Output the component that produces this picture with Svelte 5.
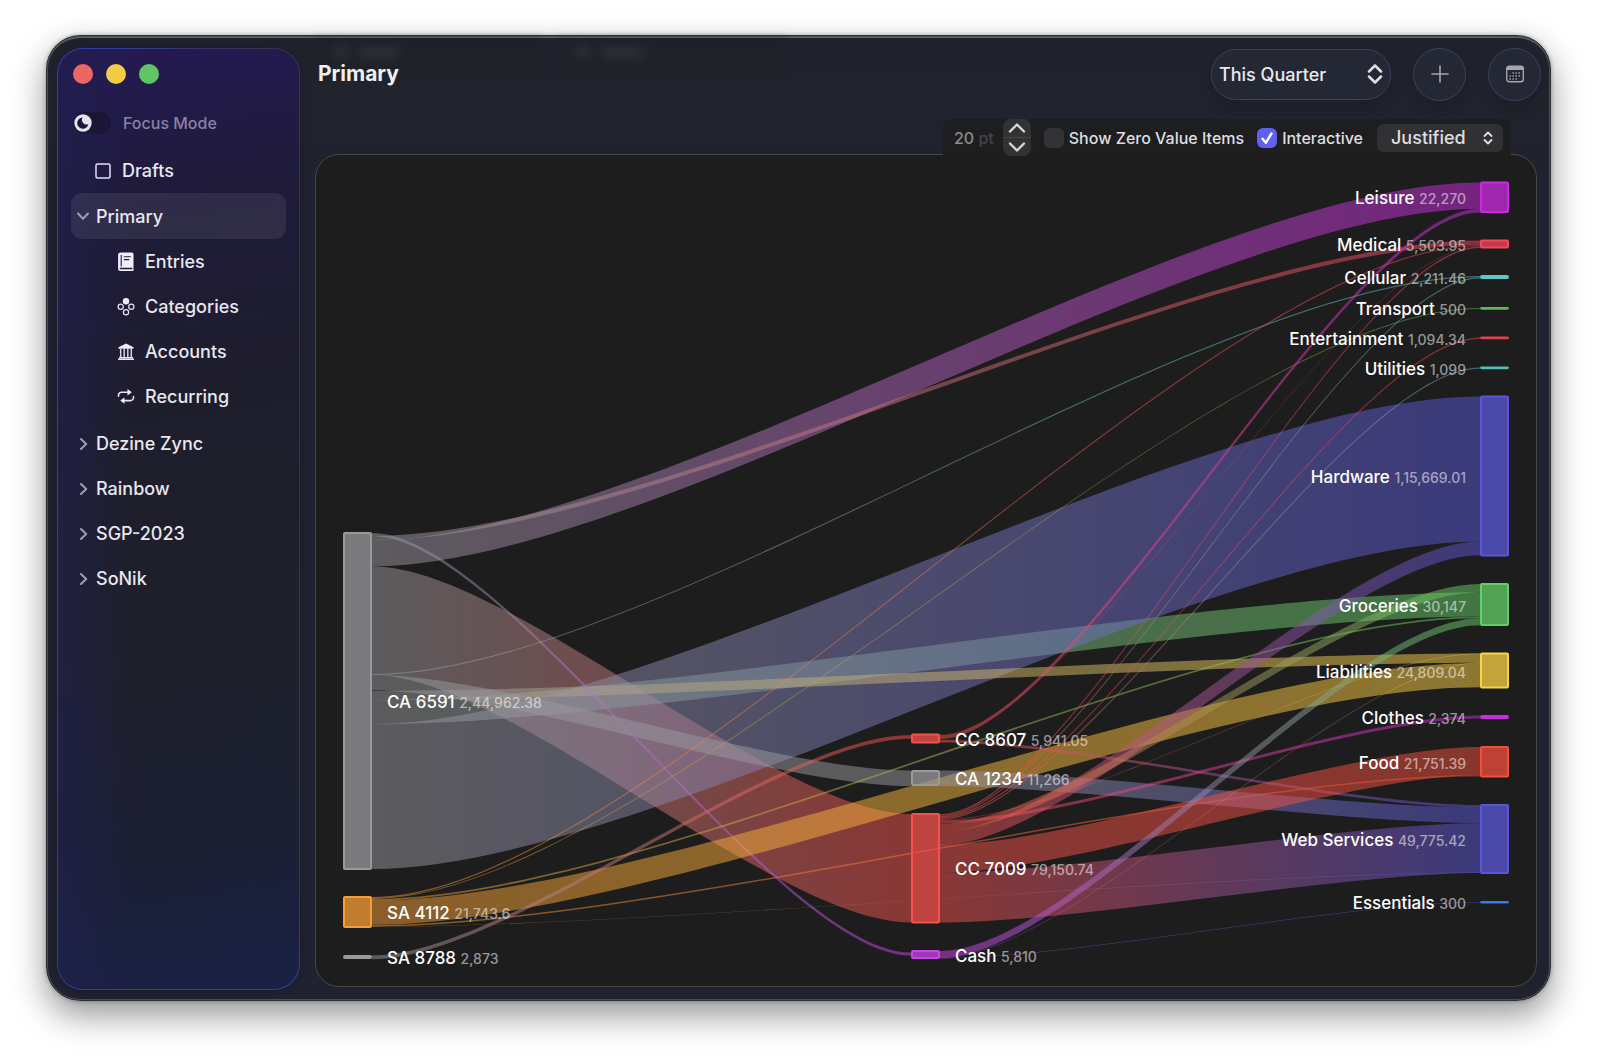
<script>
  const W = 27;
  const COL = { left: 28, mid: 596, right: 1165 };

  const nodes = {
    ca6591: { label: 'CA 6591', value: '2,44,962.38', col: 'left', y: 378, h: 336, color: '#9a999e' },
    sa4112: { label: 'SA 4112', value: '21,743.6', col: 'left', y: 742, h: 30, color: '#f79d35' },
    sa8788: { label: 'SA 8788', value: '2,873', col: 'left', y: 801, h: 2, color: '#9a999e' },
    cc8607: { label: 'CC 8607', value: '5,941.05', col: 'mid', y: 579.5, h: 8, color: '#f5524b' },
    ca1234: { label: 'CA 1234', value: '11,266', col: 'mid', y: 616, h: 14, color: '#9a999e' },
    cc7009: { label: 'CC 7009', value: '79,150.74', col: 'mid', y: 659, h: 108.5, color: '#f5524b' },
    cash: { label: 'Cash', value: '5,810', col: 'mid', y: 796, h: 7, color: '#cb41ee' },
    leisure: { label: 'Leisure', value: '22,270', col: 'right', y: 27.5, h: 29.5, color: '#cb2be0' },
    medical: { label: 'Medical', value: '5,503.95', col: 'right', y: 85.5, h: 7, color: '#f9455c' },
    cellular: { label: 'Cellular', value: '2,211.46', col: 'right', y: 121, h: 2, color: '#5ac8c8' },
    transport: { label: 'Transport', value: '500', col: 'right', y: 153, h: 0.7, color: '#5cba58' },
    entertainment: { label: 'Entertainment', value: '1,094.34', col: 'right', y: 182.5, h: 0.8, color: '#df4254' },
    utilities: { label: 'Utilities', value: '1,099', col: 'right', y: 212.4, h: 0.8, color: '#58bab8' },
    hardware: { label: 'Hardware', value: '1,15,669.01', col: 'right', y: 241.5, h: 159, color: '#5957d8' },
    groceries: { label: 'Groceries', value: '30,147', col: 'right', y: 429, h: 41, color: '#65cf67' },
    liabilities: { label: 'Liabilities', value: '24,809.04', col: 'right', y: 498.5, h: 34, color: '#fbd146' },
    clothes: { label: 'Clothes', value: '2,374', col: 'right', y: 561, h: 2, color: '#cb2be0' },
    food: { label: 'Food', value: '21,751.39', col: 'right', y: 592, h: 29.5, color: '#f34f3c' },
    web: { label: 'Web Services', value: '49,775.42', col: 'right', y: 650, h: 68, color: '#5957d8' },
    essentials: { label: 'Essentials', value: '300', col: 'right', y: 747, h: 0.6, color: '#3a78ee' }
  };

  // source, offset in source, target, offset in target, thickness
  const links = [
    ['ca6591', 33.3, 'cc7009', 0, 108.5],
    ['ca6591', 7, 'leisure', 0, 26.3],
    ['ca6591', 167, 'groceries', 8.3, 24.2],
    ['ca6591', 191, 'hardware', 0, 145],
    ['ca6591', 158, 'liabilities', 0, 9.2],
    ['ca6591', 142, 'ca1234', -0.5, 15.5],
    ['ca6591', 3, 'medical', 0, 4.2],
    ['ca6591', 0, 'cash', 1.5, 3],
    ['ca6591', 141, 'cellular', 0, 1.2],
    ['sa4112', 0, 'medical', 4.4, 1.2],
    ['sa4112', 1, 'transport', 0, 0.9],
    ['sa4112', 1.9, 'groceries', 32.5, 1.8],
    ['sa4112', 3.6, 'liabilities', 9.6, 24.2],
    ['sa4112', 28, 'food', 28, 1.5],
    ['sa4112', 29.6, 'web', 67.6, 0.4],
    ['sa8788', -0.5, 'cc8607', 0.5, 3.8],
    ['cc8607', 0.7, 'leisure', 26.3, 3.8],
    ['cc8607', 0, 'medical', 5.4, 0.4],
    ['cc8607', 5.3, 'web', 0, 2.7],
    ['ca1234', -0.5, 'web', 2.7, 15.5],
    ['cc7009', 58.7, 'web', 18.2, 49.8],
    ['cc7009', 30.7, 'food', 0, 28],
    ['cc7009', 17.8, 'hardware', 145, 13.7],
    ['cc7009', 9.6, 'groceries', 0, 8.2],
    ['cc7009', 6.3, 'clothes', -0.5, 3],
    ['cc7009', 0.3, 'medical', 6, 1.5],
    ['cc7009', 1.7, 'cellular', 1.2, 1.4],
    ['cc7009', 3, 'entertainment', 0, 1.4],
    ['cc7009', 4.4, 'utilities', 0, 1.4],
    ['cc7009', 5.8, 'liabilities', 0, 0.4],
    ['cash', 0, 'groceries', 34.2, 7],
    ['cash', 6.6, 'liabilities', 9, 0.4],
    ['cash', 7, 'essentials', 0, 0.4]
  ].map(([s, so, t, to, h], i) => {
    const a = nodes[s];
    const b = nodes[t];
    const x0 = COL[a.col] + W + 1;
    const x1 = COL[b.col] - 1;
    const c = (x1 - x0) / 4;
    const y0 = a.y + so;
    const y1 = b.y + to;
    return {
      id: `flow-${i}`, x0, x1, from: a.color, to: b.color,
      d: `M${x0} ${y0}C${x0 + c} ${y0} ${x1 - c} ${y1} ${x1} ${y1}V${y1 + h}C${x1 - c} ${y1 + h} ${x0 + c} ${y0 + h} ${x0} ${y0 + h}Z`
    };
  });

  const children = [
    { name: 'Entries', icon: 'book' },
    { name: 'Categories', icon: 'dots' },
    { name: 'Accounts', icon: 'bank' },
    { name: 'Recurring', icon: 'repeat' }
  ];
  const books = ['Dezine Zync', 'Rainbow', 'SGP-2023', 'SoNik'];

  let size = $state(20);
  let zero = $state(false);
  let interactive = $state(true);
  let focus = $state(false);
</script>

<div class="desktop">
  <div class="window">
    <aside class="sidebar">
      <div class="lights">
        <button class="light red" aria-label="Close"></button>
        <button class="light yellow" aria-label="Minimise"></button>
        <button class="light green" aria-label="Zoom"></button>
      </div>
      <label class="focus">
        <input type="checkbox" class="switch-input" bind:checked={focus} />
        <span class="switch">
          <svg viewBox="0 0 18 18" width="18" height="18" aria-hidden="true">
            <circle cx="9" cy="9" r="8.7" fill="#e6e3ee" />
            <path d="M8.6 3.6a5.6 5.6 0 1 0 5.7 6.6 4.6 4.6 0 0 1-5.7-6.6z" fill="#1b1738" />
          </svg>
        </span>
        <span>Focus Mode</span>
      </label>
      <nav>
        <a class="row drafts" href="#drafts">
          <svg viewBox="0 0 16 16" width="16" height="16" aria-hidden="true"><rect x="1" y="1" width="14" height="14" rx="1.5" fill="none" stroke="#e6e0fa" stroke-width="1.5" /></svg>
          Drafts
        </a>
        <a class="row top active" href="#primary">
          <svg class="chev" viewBox="0 0 12 12" width="12" height="12" aria-hidden="true"><path d="M1 3.5l5 5.2 5-5.2" /></svg>
          Primary
        </a>
        <div class="children">
          {#each children as c}
            <a class="row child" href={'#' + c.name.toLowerCase()}>
              <svg viewBox="0 0 18 20" width="18" height="20" aria-hidden="true">
                {#if c.icon === 'book'}
                  <path d="M3.6.5h11.2a1.7 1.7 0 0 1 1.7 1.7v16a.7.7 0 0 1-.7.7H3.6a2.5 2.5 0 0 1-2.5-2.5V3A2.500 2.500 0 0 1 3.600.5z" fill="#f0edff" />
                  <path d="M4.200 3v11.500M6.800 4.800h7M6.800 7.600h5.500" stroke="#1f1c3d" stroke-width="1.1" fill="none" />
                  <path d="M3.400 15.700h12v1.500h-12a.75.75 0 0 1 0-1.500z" fill="#1f1c3d" />
                {:else if c.icon === 'dots'}
                  <circle cx="9" cy="4.300" r="3.200" fill="#f0edff" />
                  <g fill="none" stroke="#e6e0fa" stroke-width="1.200">
                    <circle cx="3.700" cy="9.700" r="2.600" />
                    <circle cx="14.300" cy="9.700" r="2.600" />
                    <circle cx="9" cy="15.200" r="2.600" />
                  </g>
                {:else if c.icon === 'bank'}
                  <path d="M9 1.500L16.500 5.300v1.400h-15V5.300z" fill="#f0edff" />
                  <path d="M3.700 6.500v9.500M7.200 6.500v9.500M10.800 6.500v9.500M14.300 6.500v9.500" stroke="#d5d0ea" stroke-width="1.500" />
                  <path d="M2 15.600h14M1 17.300h16" stroke="#e6e0fa" stroke-width="1.400" />
                {:else}
                  <path d="M1.500 9.300V8.200a3 3 0 0 1 3-3H12M16.500 9.500v1.100a3 3 0 0 1-3 3H6" fill="none" stroke="#e6e0fa" stroke-width="1.600" stroke-linecap="round" />
                  <path d="M10.500 2l4.300 3.200-4.300 3.200zM7.500 10.400l-4.300 3.200 4.300 3.200z" fill="#f0edff" />
                {/if}
              </svg>
              {c.name}
            </a>
          {/each}
        </div>
        {#each books as b}
          <a class="row top" href={'#' + b}>
            <svg class="chev" viewBox="0 0 12 12" width="12" height="12" aria-hidden="true"><path d="M4 1l5.200 5-5.200 5" /></svg>
            {b}
          </a>
        {/each}
      </nav>
    </aside>

    <main>
      <svg class="ghost" viewBox="0 0 480 44" width="480" height="44" aria-hidden="true">
        <rect width="226" height="36" fill="#1f2125" />
        <rect x="244" width="226" height="36" fill="#1f2125" />
        <g fill="#3a3d42">
          <ellipse cx="26" cy="13" rx="9" ry="6" />
          <rect x="44" y="8" width="40" height="11" />
          <ellipse cx="268" cy="13" rx="9" ry="6" />
          <rect x="286" y="8" width="42" height="11" />
        </g>
      </svg>
      <header>
        <h1>Primary</h1>
        <div class="picker period">
          <select aria-label="Period"><option>This Quarter</option><option>This Year</option></select>
          <svg viewBox="0 0 16 20" width="16" height="20" aria-hidden="true"><path d="M2 7.500L8 1.500l6 6M2 12.500l6 6 6-6" /></svg>
        </div>
        <button class="round" aria-label="Add">
          <svg viewBox="0 0 18 18" width="18" height="18" aria-hidden="true"><path d="M9 1v16M1 9h16" stroke="#a5a7ac" stroke-width="1.600" stroke-linecap="round" /></svg>
        </button>
        <button class="round" aria-label="Calendar">
          <svg viewBox="0 0 20 18" width="20" height="18" aria-hidden="true">
            <rect x="1.700" y="1.200" width="16.600" height="15.600" rx="2.500" fill="none" stroke="#a5a7ac" stroke-width="1.400" />
            <path d="M1.500 5V3.500a2.500 2.500 0 0 1 2.500-2.500h12a2.500 2.500 0 0 1 2.500 2.500V5z" fill="#a5a7ac" />
            <path d="M7.500 8h8.500M4.500 11h11.500M4.500 14h8.500" stroke="#a5a7ac" stroke-width="1.400" stroke-dasharray="1.400 1.600" />
          </svg>
        </button>
      </header>

      <div class="options">
        <div class="size"><span>{size}</span> <span class="unit">pt</span></div>
        <div class="stepper">
          <button aria-label="Increase" onclick={() => size++}><svg viewBox="0 0 18 10" width="18" height="10" aria-hidden="true"><path d="M2 8.500l7-7 7 7" /></svg></button>
          <button aria-label="Decrease" onclick={() => size--}><svg viewBox="0 0 18 10" width="18" height="10" aria-hidden="true"><path d="M2 1.500l7 7 7-7" /></svg></button>
        </div>
        <label class="check zero"><input type="checkbox" bind:checked={zero} />Show Zero Value Items</label>
        <label class="check"><input type="checkbox" bind:checked={interactive} />Interactive</label>
        <div class="picker align">
          <select aria-label="Alignment"><option>Justified</option><option>Left</option></select>
          <svg viewBox="0 0 10 14" width="10" height="14" aria-hidden="true"><path d="M1.500 5L5 1.500 8.500 5M1.500 9L5 12.500 8.500 9" /></svg>
        </div>
      </div>

      <section class="card">
        <svg class="chart" viewBox="0 0 1220 831" role="img" aria-label="Cash flow between accounts and categories">
          <defs>
            {#each links as l}
              <linearGradient id={l.id} gradientUnits="userSpaceOnUse" x1={l.x0} x2={l.x1} y1="0" y2="0">
                <stop offset="0" stop-color={l.from} />
                <stop offset="1" stop-color={l.to} />
              </linearGradient>
            {/each}
          </defs>
          {#each links as l}
            <path d={l.d} fill={`url(#${l.id})`} fill-opacity="0.5" />
          {/each}
          {#each Object.values(nodes) as n}
            <rect x={COL[n.col]} y={n.y} width={W} height={n.h} rx="1" fill={n.color} fill-opacity="0.75" stroke={n.color} stroke-width="2" stroke-linejoin="round" />
            {#if n.col === 'right'}
              <text class="name" x={COL.right - 15} y={n.y + n.h / 2 + 7} text-anchor="end">{n.label} <tspan class="value">{n.value}</tspan></text>
            {:else}
              <text class="name" x={COL[n.col] + 43} y={n.y + n.h / 2 + 7}>{n.label} <tspan class="value">{n.value}</tspan></text>
            {/if}
          {/each}
        </svg>
      </section>
    </main>
  </div>
</div>

<style>
  :global(body) {
    background: #fff;
    font-family: Inter, 'Liberation Sans', sans-serif;
    color: #e9e8ee;
  }
  .desktop {
    box-sizing: border-box;
    min-height: 100vh;
    padding: 35px 47px 56px 46px;
    background: #fff;
    overflow: hidden;
  }
  .window {
    box-sizing: border-box;
    display: flex;
    gap: 15px;
    padding: 12px 9px 10px 10px;
    border: 1px solid #2f3137;
    border-radius: 34px;
    background: linear-gradient(180deg, #20222c 0, #21242c 60px, #202230 110px, #202230 100%);
    box-shadow:
      inset 0 0 0 1px #4c4e57,
      inset 0 2px 0 #64666e,
      0 0 4px rgba(0, 0, 0, 0.3),
      0 14px 34px rgba(0, 0, 0, 0.42);
  }
  .sidebar {
    box-sizing: border-box;
    flex: 0 0 243px;
    border: 1px solid transparent;
    border-radius: 26px;
    padding: 15px 13px;
    background:
      linear-gradient(90deg, rgba(32, 32, 80, 0.6), transparent 30%) padding-box,
      linear-gradient(172deg, #241a54 0, #1f1b3a 16%, #1e1d2d 36%, #1f202a 62%, #1b2033 84%, #1a2146 100%) padding-box,
      linear-gradient(0deg, #2b409c 0, transparent 10%) border-box,
      linear-gradient(95deg, #4436c0 0, #363fb0 5%, #34344c 60%, #34365a 100%) border-box;
    box-shadow: 0 0 12px rgba(10, 10, 30, 0.2);
  }
  .lights {
    display: flex;
    gap: 13px;
    padding-left: 2px;
  }
  .light {
    width: 20px;
    height: 20px;
    padding: 0;
    border: 0;
    border-radius: 50%;
  }
  .red { background: #ed6663; }
  .yellow { background: #f4cb45; }
  .green { background: #62c565; }
  .focus {
    display: flex;
    align-items: center;
    gap: 12px;
    height: 24px;
    margin: 27px 0 13px 2px;
    font-size: 16px;
    font-weight: 500;
    color: #8683a6;
  }
  .switch-input {
    position: absolute;
    opacity: 0;
  }
  .switch {
    display: flex;
    align-items: center;
    box-sizing: border-box;
    width: 38px;
    height: 22px;
    padding-left: 1px;
    border-radius: 11px;
    background: #191636;
  }
  .row {
    display: flex;
    align-items: center;
    box-sizing: border-box;
    height: 45px;
    font-size: 18px;
    font-weight: 500;
    color: #e8e6ef;
    text-decoration: none;
    border-radius: 11px;
  }
  .drafts { padding-left: 24px; gap: 11px; }
  .top { padding-left: 6px; gap: 7px; }
  .active { height: 46px; background: rgba(255, 255, 255, 0.08); }
  .child { padding-left: 46px; gap: 10px; }
  .children { padding-bottom: 2px; }
  .chev path {
    fill: none;
    stroke: #9f9cb5;
    stroke-width: 2;
    stroke-linecap: round;
    stroke-linejoin: round;
  }
  main {
    flex: 1;
    min-width: 0;
    display: flex;
    flex-direction: column;
    padding-bottom: 3px;
    position: relative;
  }
  .ghost {
    position: absolute;
    top: -9px;
    left: 0;
    filter: blur(4px);
    opacity: 0.45;
  }
  header {
    position: relative;
    display: flex;
    align-items: center;
    height: 52px;
  }
  h1 {
    flex: 1;
    margin: 0 0 0 3px;
    font-size: 21px;
    font-weight: 700;
    line-height: 28px;
    color: #f1f1f4;
  }
  .picker {
    display: grid;
    align-items: center;
  }
  .picker select {
    grid-area: 1 / 1;
    box-sizing: border-box;
    width: 100%;
    height: 100%;
    appearance: none;
    border: 0;
    background: none;
    color: inherit;
    font: inherit;
  }
  .picker svg {
    grid-area: 1 / 1;
    justify-self: end;
    pointer-events: none;
  }
  .picker path {
    fill: none;
    stroke: #e0e0e5;
    stroke-linecap: round;
    stroke-linejoin: round;
  }
  .period {
    box-sizing: border-box;
    width: 180px;
    height: 51px;
    border: 1px solid #3a4160;
    border-radius: 25px;
    background: #242834;
    font-size: 18px;
    font-weight: 500;
    box-shadow: 0 8px 12px rgba(20, 20, 32, 0.3);
  }
  .period select { padding: 0 32px 0 7px; }
  .period svg { margin-right: 7px; }
  .period path { stroke-width: 2.5; }
  .round {
    display: grid;
    place-items: center;
    box-sizing: border-box;
    width: 53px;
    height: 53px;
    margin-left: 22px;
    padding: 0;
    border: 1px solid #3a4160;
    border-radius: 50%;
    background: #242834;
    box-shadow: 0 8px 12px rgba(20, 20, 32, 0.3);
  }
  .options {
    align-self: flex-end;
    display: flex;
    align-items: center;
    height: 37px;
    margin: 19px 30px -2px 0;
    padding: 0 8px 0 11px;
    border-radius: 8px 8px 0 0;
    background: #1e1e20;
    font-size: 16px;
    font-weight: 500;
    color: #dedee0;
    position: relative;
  }
  .size { color: #8c8c92; margin-right: 9px; }
  .unit { color: #434349; }
  .stepper {
    display: flex;
    flex-direction: column;
    width: 28px;
    height: 37px;
    margin-right: 13px;
    border-radius: 8px;
    background: #323233;
  }
  .stepper button {
    flex: 1;
    display: grid;
    place-items: center;
    padding: 0;
    border: 0;
    background: none;
  }
  .stepper button + button { border-top: 1px solid #454547; }
  .stepper path {
    fill: none;
    stroke: #d8d8da;
    stroke-width: 2.4;
    stroke-linecap: round;
    stroke-linejoin: round;
  }
  .check {
    display: flex;
    align-items: center;
    gap: 5px;
    margin-right: 14px;
    white-space: nowrap;
  }
  .zero { margin-right: 13px; }
  .check input {
    appearance: none;
    width: 20px;
    height: 20px;
    margin: 0;
    border-radius: 6px;
    background: #333335;
  }
  .check input:checked {
    background: #615ff0 url("data:image/svg+xml,%3Csvg xmlns='http://www.w3.org/2000/svg' viewBox='0 0 20 20'%3E%3Cpath d='M5.500 10.800l3.300 4L14.500 5.500' fill='none' stroke='white' stroke-width='2.400' stroke-linecap='round' stroke-linejoin='round'/%3E%3C/svg%3E");
  }
  .align {
    width: 126px;
    height: 28px;
    border-radius: 7px;
    background: #313133;
    font-size: 18px;
  }
  .align select { padding: 0 28px 0 14px; }
  .align svg { margin-right: 10px; }
  .align path { stroke-width: 1.8; }
  .card {
    margin-right: 4px;
    border: 1px solid #48484a;
    border-radius: 24px;
    background: #1d1d1d;
    overflow: hidden;
  }
  .chart {
    display: block;
    width: 100%;
    height: auto;
  }
  .name {
    font-size: 17px;
    font-weight: 500;
    fill: #fff;
  }
  .value {
    font-size: 14px;
    fill: rgba(255, 255, 255, 0.55);
  }
</style>
